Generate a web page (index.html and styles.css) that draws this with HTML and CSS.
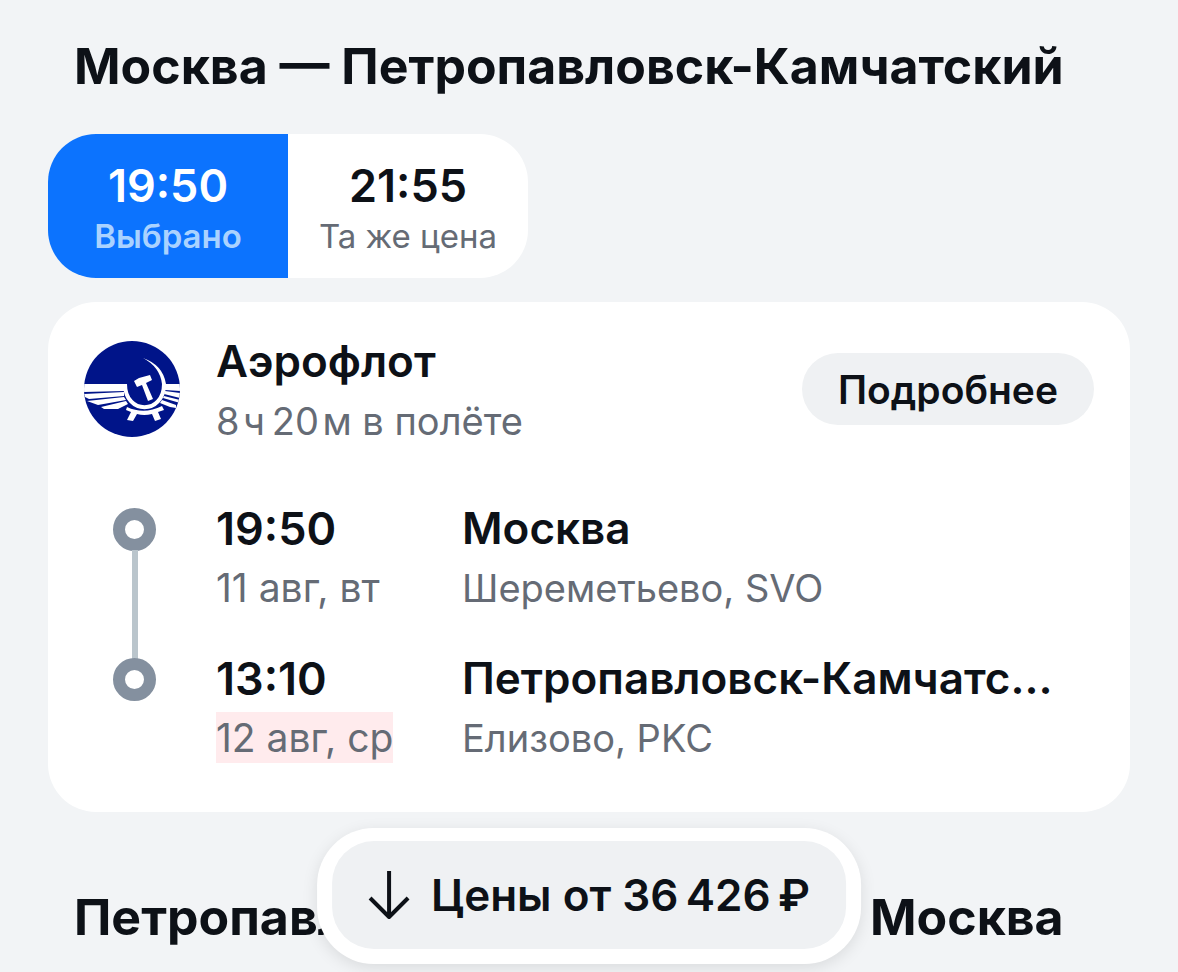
FILE: index.html
```
<!DOCTYPE html>
<html lang="ru">
<head>
<meta charset="utf-8">
<meta name="viewport" content="width=device-width, initial-scale=1.0">
<link rel="stylesheet" href="styles.css">
<title>Москва — Петропавловск-Камчатский</title>
</head>
<body>
<main class="page">
<h2 class="route">Москва — Петропавловск-Камчатский</h2>
<div class="tabs">
<button class="tab active"><span class="time">19:50</span><span class="note">Выбрано</span></button>
<button class="tab"><span class="time">21:55</span><span class="note">Та же цена</span></button>
</div>
<section class="card">
<div class="head">
<svg class="logo" viewBox="0 0 96 96">
<defs><clipPath id="round"><circle cx="48" cy="48" r="48"/></clipPath></defs>
<g clip-path="url(#round)">
<rect width="96" height="96" fill="#001489"/>
<!-- wings -->
<path d="M0 43H40V50L0 51Z" fill="#fff"/>
<path d="M0 53L40 51V55L5 58L1 56Z" fill="#fff"/>
<path d="M3 60L40 56L42 59L14 64Z" fill="#fff"/>
<path d="M17 66L42 60L44 63L34 68H20Z" fill="#fff"/>
<path d="M81 43H96V50L81 49Z" fill="#fff"/>
<path d="M81 50L96 52V57L80 53Z" fill="#fff"/>
<path d="M80 55L96 59V62L79 57Z" fill="#fff"/>
<path d="M78 59L92 64V67L86 66L76 62Z" fill="#fff"/>
<!-- sickle -->
<path d="M41 43C41 74 80 74 80 43" fill="none" stroke="#fff" stroke-width="4"/>
<path d="M59 17Q79 24 82 43H78Q76 26 59 17Z" fill="#fff"/>
<!-- gear with legs -->
<path d="M43 66Q60 74 78 65L80 69L74 71L77 78L71 80L68 73Q60 75 53 73L49 80L43 79L47 71L42 69Z" fill="#fff"/>
<!-- hammer -->
<path d="M50 40L55 37L66 34L68 39L62 42L69 58L64 60L58 44L53 46Z" fill="#fff"/>
</g>
</svg>
<div class="airline">
<div class="name">Аэрофлот</div>
<div class="sub">8&#8202;ч&#8201;20&#8202;м в полёте</div>
</div>
<button class="more">Подробнее</button>
</div>
<div class="points">
<div class="point">
<div class="dot"></div>
<div><div class="name time">19:50</div><div class="sub date">11 авг, вт</div></div>
<div class="place"><div class="name">Москва</div><div class="sub">Шереметьево, SVO</div></div>
</div>
<div class="point">
<div class="dot"></div>
<div><div class="name time">13:10</div><div class="sub date"><span class="nextday">12 авг, ср</span></div></div>
<div class="place"><div class="name">Петропавловск-Камчатский</div><div class="sub">Елизово, PKC</div></div>
</div>
</div>
</section>
<h2 class="route back">Петропавловск-Камчатский — Москва</h2>
</main>
<div class="dock">
<button class="prices">
<svg class="arrow" viewBox="0 0 42 48"><path d="M21 0V45M2 27L21 46L40 27" fill="none" stroke="#0d1117" stroke-width="4" stroke-linejoin="round"/></svg>
<span>Цены от 36&#8201;426&#8201;₽</span>
</button>
</div>
</body>
</html>
```
FILE: styles.css
```
*{
box-sizing:border-box;
}
body{
margin:0;
background:#f2f4f6;
color:#0d1117;
font-family:Inter,"Liberation Sans",sans-serif;
}
button{
border:0;
padding:0;
color:inherit;
font-family:inherit;
cursor:pointer;
}
.page{
padding:36px 48px 24px;
}
.route{
margin:0 0 38px;
padding:0 26px;
font-size:50px;
line-height:60px;
font-weight:700;
white-space:nowrap;
}
.tabs{
display:inline-grid;
grid-template-columns:1fr 1fr;
vertical-align:top;
border-radius:48px;
overflow:hidden;
margin-bottom:24px;
}
.tab{
display:flex;
flex-direction:column;
align-items:center;
min-width:240px;
background:#fff;
padding:22px 30px;
}
.time{
font-size:45px;
font-weight:600;
}
.tab .time{
line-height:60px;
}
.tab .note{
font-size:33px;
line-height:40px;
color:#656b75;
white-space:nowrap;
}
.tab.active{
background:#0c73fe;
color:#fff;
}
.active .note{
color:#aad2ff;
font-weight:600;
}
.card{
background:#fff;
border-radius:48px;
padding:30px 36px 44px;
}
.head{
display:flex;
align-items:flex-start;
margin-bottom:48px;
}
.logo{
width:96px;
height:96px;
margin:9px 36px 0 0;
}
.airline{
flex:1;
}
.name{
font-size:44px;
line-height:59px;
font-weight:600;
white-space:nowrap;
overflow:hidden;
text-overflow:ellipsis;
}
.name.time{
font-size:45px;
}
.sub{
font-size:38px;
line-height:60px;
color:#656b75;
white-space:nowrap;
}
.date{
font-size:39px;
}
.more{
height:72px;
margin-top:21px;
padding:0 36px;
border-radius:36px;
background:#eff1f3;
font-size:39px;
font-weight:600;
}
.points{
display:grid;
gap:31px;
}
.point{
display:grid;
grid-template-columns:132px 246px 1fr;
position:relative;
}
.place{
min-width:0;
padding-right:24px;
}
.dot{
width:43px;
height:43px;
margin:9px 0 0 29px;
border:12px solid #84909f;
border-radius:50%;
background:#fff;
}
/* line between the two stops */
.point:first-child::after{
content:"";
position:absolute;
left:48px;
top:51px;
width:6px;
height:109px;
background:#bac5cc;
}
.nextday{
display:inline-block;
line-height:51px;
background:#ffebed;
}
.back{
margin:75px 0 0;
}
.dock{
position:fixed;
left:50%;
bottom:8px;
transform:translateX(-50%);
padding:13px 15px 15px;
border-radius:57px;
background:#fff;
box-shadow:0 4px 16px rgba(0,0,0,.1);
}
.prices{
display:flex;
align-items:center;
gap:21px;
height:108px;
padding:0 36px;
border-radius:42px;
background:#eff1f3;
font-size:44px;
font-weight:600;
white-space:nowrap;
}
.arrow{
width:42px;
height:48px;
}
```
